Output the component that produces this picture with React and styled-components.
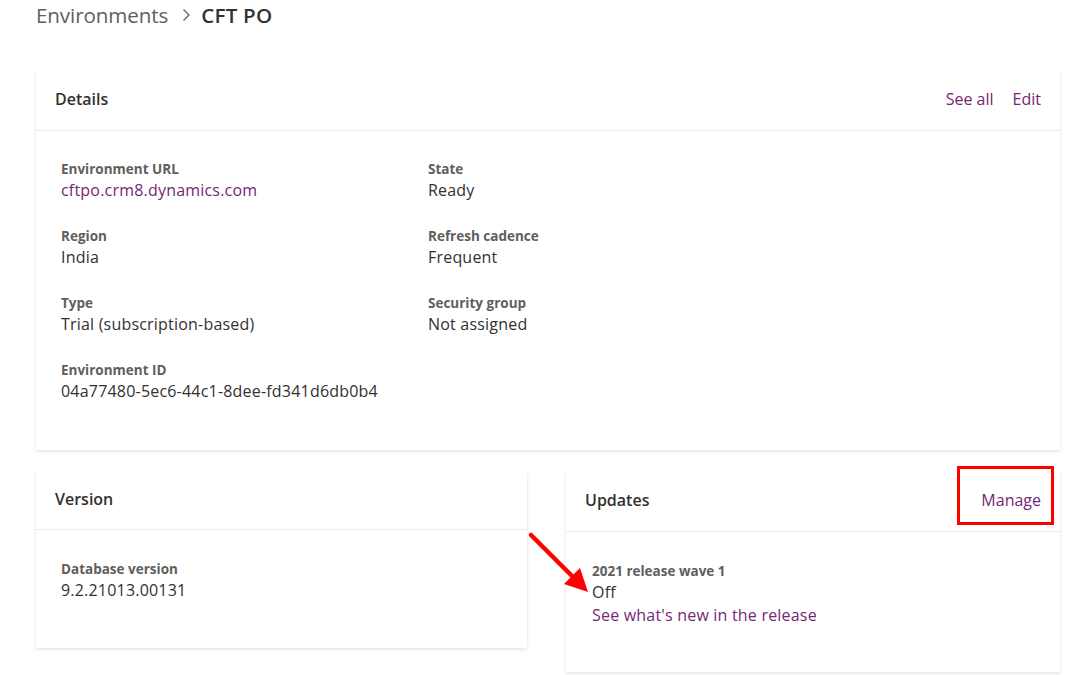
import React from "react";
import styled, { createGlobalStyle } from "styled-components";

const Global = createGlobalStyle`
  html, body { margin: 0; padding: 0; background: #fff; }
  body { font-family: "Open Sans", "Noto Sans", Arial, sans-serif; color: #323130; }
  * { box-sizing: border-box; }
`;

const Page = styled.div`
  padding: 0 20px 0 36px;
  width: 1080px;
  height: 675px;
  overflow: hidden;
  position: relative;
`;

const Breadcrumb = styled.div`
  display: flex;
  align-items: center;
  height: 29px;
  font-size: 20.6px;
  color: #605e5c;
  gap: 8px;
`;

const Crumb = styled.span`
  font-weight: ${(p) => (p.$current ? 600 : 400)};
  color: ${(p) => (p.$current ? "#323130" : "#605e5c")};
  letter-spacing: ${(p) => (p.$current ? "0.2px" : "-0.1px")};
`;

const Chevron = styled.svg`
  width: 14px;
  height: 14px;
  margin: 0 0 0 3px;
`;

const Card = styled.section`
  background: #fff;
  box-shadow: 0 1.6px 3.6px rgba(0, 0, 0, 0.12), 0 0.3px 0.9px rgba(0, 0, 0, 0.1);
  position: relative;
`;

const DetailsCard = styled(Card)`
  margin-top: 40px;
  height: 381px;
`;

const CardHeader = styled.div`
  display: flex;
  align-items: center;
  justify-content: space-between;
  height: ${(p) => p.$h || 62}px;
  padding: 0 19px 0 19px;
  border-bottom: 1px solid #edebe9;
`;

const CardTitle = styled.h2`
  margin: 0;
  font-size: 16px;
  font-weight: 600;
  color: #323130;
  line-height: 20px;
  padding-bottom: 1px;
`;

const Actions = styled.div`
  display: flex;
  gap: 19px;
`;

const ActionLink = styled.a`
  font-size: 16px;
  color: #742774;
  text-decoration: none;
  line-height: 20px;
  padding-bottom: 1px;
`;

const DetailsGrid = styled.div`
  display: grid;
  grid-template-columns: 367px 1fr;
  row-gap: 24px;
  padding: 28px 25px 0 25px;
`;

const Field = styled.div`
  display: flex;
  flex-direction: column;
`;

const Label = styled.div`
  font-size: 13.5px;
  font-weight: 700;
  color: #605e5c;
  line-height: 20px;
`;

const Value = styled.div`
  font-size: 16px;
  line-height: 23px;
  letter-spacing: 0.2px;
  color: ${(p) => (p.$link ? "#742774" : "#323130")};
`;

const BottomRow = styled.div`
  display: grid;
  grid-template-columns: 491px 494px;
  column-gap: 39px;
  margin-top: 20px;
  align-items: start;
`;

const VersionCard = styled(Card)`
  height: 178px;
`;

const UpdatesCard = styled(Card)`
  height: 202px;
`;

const CardBody = styled.div`
  padding: ${(p) => p.$pt}px ${(p) => p.$pl}px 0 ${(p) => p.$pl}px;
`;

const Highlight = styled.div`
  position: absolute;
  right: 6px;
  top: -4px;
  width: 97px;
  height: 59px;
  border: 3px solid #ff0000;
  pointer-events: none;
`;

const Arrow = styled.svg`
  position: absolute;
  left: 526px;
  top: 530px;
  width: 70px;
  height: 70px;
  pointer-events: none;
`;

const detailRows = [
  ["Environment URL", "cftpo.crm8.dynamics.com", true],
  ["State", "Ready"],
  ["Region", "India"],
  ["Refresh cadence", "Frequent"],
  ["Type", "Trial (subscription-based)"],
  ["Security group", "Not assigned"],
  ["Environment ID", "04a77480-5ec6-44c1-8dee-fd341d6db0b4"],
];

export default function App() {
  return (
    <>
      <Global />
      <Page>
        <Breadcrumb>
          <Crumb>Environments</Crumb>
          <Chevron viewBox="0 0 14 14">
            <path d="M4.5 1.5 L10 7 L4.5 12.5" fill="none" stroke="#605e5c" strokeWidth="1.2" />
          </Chevron>
          <Crumb $current>CFT PO</Crumb>
        </Breadcrumb>

        <DetailsCard>
          <CardHeader>
            <CardTitle>Details</CardTitle>
            <Actions>
              <ActionLink href="#">See all</ActionLink>
              <ActionLink href="#">Edit</ActionLink>
            </Actions>
          </CardHeader>
          <DetailsGrid>
            {detailRows.map(([l, v, link]) => (
              <Field key={l}>
                <Label>{l}</Label>
                <Value $link={link}>{v}</Value>
              </Field>
            ))}
          </DetailsGrid>
        </DetailsCard>

        <BottomRow>
          <VersionCard>
            <CardHeader $h={60}>
              <CardTitle>Version</CardTitle>
            </CardHeader>
            <CardBody $pt={29} $pl={25}>
              <Field>
                <Label>Database version</Label>
                <Value>9.2.21013.00131</Value>
              </Field>
            </CardBody>
          </VersionCard>

          <UpdatesCard>
            <CardHeader $h={62}>
              <CardTitle>Updates</CardTitle>
              <ActionLink href="#">Manage</ActionLink>
            </CardHeader>
            <Highlight />
            <CardBody $pt={29} $pl={26}>
              <Field>
                <Label>2021 release wave 1</Label>
                <Value>Off</Value>
                <Value $link>See what's new in the release</Value>
              </Field>
            </CardBody>
          </UpdatesCard>
        </BottomRow>

        <Arrow viewBox="0 0 70 70">
          <line x1="5" y1="5" x2="50" y2="50" stroke="#ff0000" strokeWidth="4.5" strokeLinecap="round" />
          <polygon points="62,62 38,54 54,38" fill="#ff0000" />
        </Arrow>
      </Page>
    </>
  );
}
